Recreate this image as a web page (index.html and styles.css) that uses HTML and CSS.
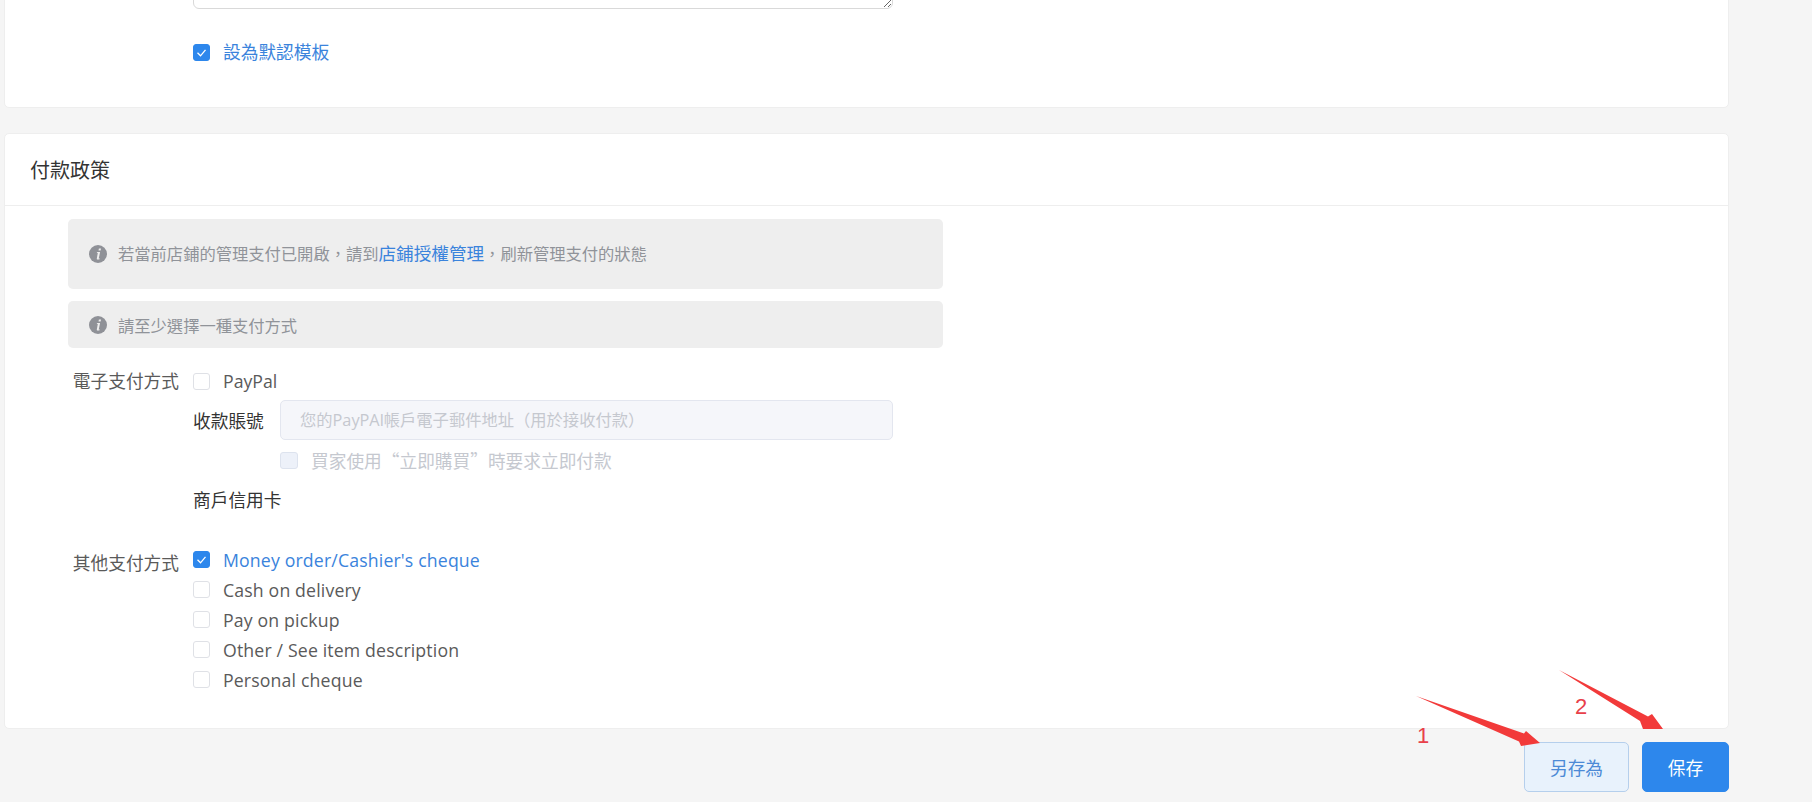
FILE: index.html
```html
<!DOCTYPE html>
<html lang="zh-Hant">
<head>
<meta charset="utf-8">
<title>付款政策</title>
<link rel="stylesheet" href="styles.css">
</head>
<body>
<main class="page">
  <section class="card card-top">
    <textarea class="notes"></textarea>
    <label class="check is-on default-row"><span class="box"><svg viewBox="0 0 17 17"><path d="M4.500 8.800l3 3 5-6" /></svg></span><span>設為默認模板</span></label>
  </section>

  <section class="card card-pay">
    <h2 class="card-title">付款政策</h2>
    <div class="card-body">
      <div class="alert alert-tall">
        <svg class="info" viewBox="0 0 18 18"><circle cx="9" cy="9" r="9"/><path class="i" d="M9.900 3.400h2.100l-.4 2.100H9.500zM9 7h2.100l-1.300 6.200c-.1.400.3.400 1 .1l-.2.900c-1.500.7-3 .6-2.800-.8L8.800 8c-.4 0-.7 0-1 .1l.2-.9z"/></svg>
        <p>若當前店鋪的管理支付已開啟，請到<a class="link">店鋪授權管理</a>，刷新管理支付的狀態</p>
      </div>
      <div class="alert alert-short">
        <svg class="info" viewBox="0 0 18 18"><circle cx="9" cy="9" r="9"/><path class="i" d="M9.900 3.400h2.100l-.4 2.100H9.500zM9 7h2.100l-1.300 6.200c-.1.400.3.400 1 .1l-.2.900c-1.500.7-3 .6-2.800-.8L8.800 8c-.4 0-.7 0-1 .1l.2-.9z"/></svg>
        <p>請至少選擇一種支付方式</p>
      </div>

      <div class="group group-online">
        <div class="group-label">電子支付方式</div>
        <div class="group-main">
          <label class="check"><span class="box"></span><span>PayPal</span></label>
          <div class="account">
            <span class="account-label">收款賬號</span>
            <input class="account-input" disabled placeholder="您的PayPAl帳戶電子郵件地址（用於接收付款）">
          </div>
          <label class="check is-disabled"><span class="box"></span><span>買家使用“立即購買”時要求立即付款</span></label>
          <div class="merchant">商戶信用卡</div>
        </div>
      </div>

      <div class="group group-other">
        <div class="group-label other-label">其他支付方式</div>
        <div class="group-main">
          <label class="check is-on"><span class="box"><svg viewBox="0 0 17 17"><path d="M4.500 8.800l3 3 5-6" /></svg></span><span class="opt">Money order/Cashier's cheque</span></label>
          <label class="check"><span class="box"></span><span class="opt">Cash on delivery</span></label>
          <label class="check"><span class="box"></span><span class="opt">Pay on pickup</span></label>
          <label class="check"><span class="box"></span><span class="opt">Other / See item description</span></label>
          <label class="check"><span class="box"></span><span class="opt">Personal cheque</span></label>
        </div>
      </div>
    </div>
  </section>

  <div class="actions">
    <button class="btn btn-light">另存為</button>
    <button class="btn btn-primary">保存</button>
  </div>
</main>

<svg class="marks" viewBox="0 0 1812 802" aria-hidden="true">
  <polygon points="1416,696 1524,733.500 1526,731 1540,743 1521,746 1519,741.500"/>
  <polygon points="1559,670 1648,716.500 1652,714 1663,729 1643,729 1640,721"/>
</svg>
<span class="mark mark-1">1</span>
<span class="mark mark-2">2</span>
</body>
</html>
```
FILE: styles.css
```css
* { box-sizing: border-box; }
html, body { margin: 0; height: 802px; overflow: hidden; background: #f5f5f5; }
body {
  position: relative;
  font-family: "Open Sans", "Noto Sans CJK TC", sans-serif;
  font-size: 17.700px;
  color: #5a5a5a;
}
.page { width: 1725px; margin: -92px 0 0 4px; }
.card {
  background: #fff;
  border: 1px solid #eeeeee;
  border-radius: 5px;
}
.card-top { height: 200px; margin-bottom: 25px; padding: 0 0 0 188px; }
.notes {
  display: block;
  width: 700px;
  height: 100px;
  border: 1px solid #d9d9d9;
  border-radius: 6px;
  background: #fff;
  outline: 0;
}
.default-row { margin-top: 28px; }

.check { display: flex; align-items: center; height: 30px; gap: 13px; line-height: 30px; white-space: nowrap; }
.box {
  flex: none;
  width: 17px;
  height: 17px;
  border: 1px solid #dfe1e6;
  border-radius: 3px;
  background: #fff;
}
.box svg { display: block; width: 17px; height: 17px; margin: -1px; fill: none; stroke: #fff; stroke-width: 1.300; }
.is-on { color: #3a83dc; }
.is-on .box { background: #2d87ec; border-color: #2d87ec; }
.is-disabled { color: #c5c8cf; font-family: "Noto Sans CJK TC", sans-serif; }
.is-disabled .box { background: #edf1f9; border-color: #dde3ee; width: 18px; }
.opt { padding-top: 2px; letter-spacing: 0.15px; }

.card-title {
  margin: 0;
  height: 72px;
  padding: 0 0 0 25px;
  border-bottom: 1px solid #eeeeee;
  font-size: 20px;
  font-weight: 400;
  line-height: 73px;
  color: #333;
}
.card-body { padding: 13px 0 34px 63px; }

.alert {
  display: flex;
  gap: 11px;
  width: 875px;
  padding: 0 21px;
  border-radius: 5px;
  background: #eeeeee;
  color: #909399;
  font-size: 16.300px;
}
.alert p { margin: 0; line-height: 30px; }
.alert-tall { height: 70px; padding-top: 20px; margin-bottom: 12px; }
.alert-tall p { margin-top: -1px; }
.alert-short { height: 47px; align-items: center; }
.alert-short p { padding-top: 2px; }
.info { flex: none; width: 18px; height: 18px; }
.alert-tall .info { margin-top: 6px; }
.info circle { fill: #8f9197; }
.info .i { fill: #eeeeee; }
.link { color: #3a83dc; font-size: 17.600px; }

.group { display: grid; grid-template-columns: 111px 1fr; column-gap: 14px; }
.group-online { margin-top: 18px; }
.group-other { margin-top: 29px; }
.group-label { line-height: 30px; text-align: right; white-space: nowrap; }
.other-label { padding-top: 4px; }

.account { display: flex; align-items: center; height: 40px; margin-top: 4px; gap: 14px; }
.account-label { color: #333; width: 73px; white-space: nowrap; }
.account-input {
  width: 613px;
  height: 40px;
  padding: 0 19px;
  border: 1px solid #e3e6ef;
  border-radius: 5px;
  background: #f5f6fa;
  font: inherit;
  font-size: 16.300px;
}
.account-input::placeholder { color: #c5c8cf; opacity: 1; }
.is-disabled { margin: 5px 0 0 87px; }
.merchant { margin-top: 10px; color: #333; line-height: 30px; }

.actions { display: flex; justify-content: flex-end; gap: 13px; margin-top: 13px; }
.btn {
  height: 50px;
  border-radius: 5px;
  font: inherit;
  font-size: 17.700px;
}
.btn-light { width: 105px; background: #e8f2fc; border: 1px solid #b5cfec; color: #4c8ad6; }
.btn-primary { width: 87px; background: #2d87ec; border: 1px solid #2d87ec; color: #fff; }

.marks { position: absolute; left: 0; top: 0; width: 1812px; height: 802px; fill: #f23a3a; pointer-events: none; }
.mark { position: absolute; font-family: "Liberation Sans", sans-serif; font-size: 22px; line-height: 24px; color: #e8404a; }
.mark-1 { left: 1417px; top: 724px; }
.mark-2 { left: 1575px; top: 695px; }
```
